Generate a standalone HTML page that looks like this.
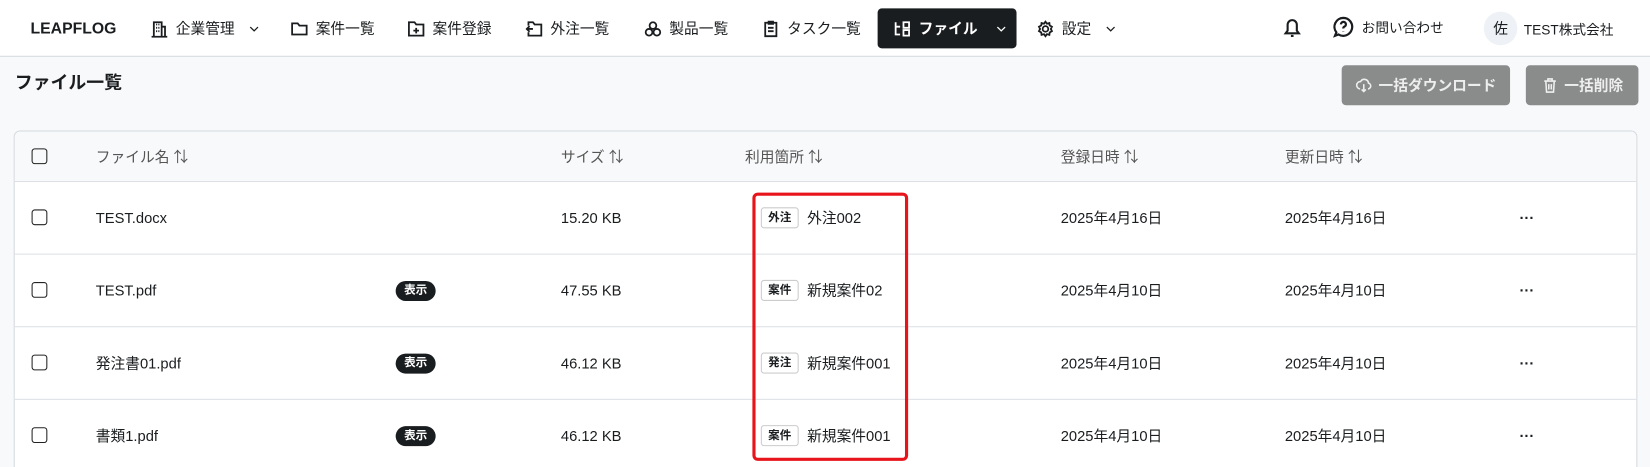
<!DOCTYPE html>
<html style="overflow:hidden;height:467px"><head><meta charset="utf-8"><style>
*{box-sizing:border-box;margin:0;padding:0}
body{width:1650px;height:467px;overflow:hidden;background:#f8f9fa;font-family:"Liberation Sans","Noto Sans CJK JP",sans-serif;color:#1a1d1f;font-size:14px;position:relative}
#w{position:absolute;left:0;top:0;width:1568px;height:444px;overflow:hidden;transform:scale(1.05230);transform-origin:0 0}
.hdr{position:absolute;left:0;top:0;width:1568px;height:54px;background:#fff;border-bottom:1px solid #d5d9de}
.a{position:absolute;display:flex;align-items:center;gap:7px;font-size:14px;white-space:nowrap;height:20px}
.a svg{width:17px;height:17px;fill:none;stroke:#1a1d1f;stroke-width:1.6}
.a svg.ch{width:11px;height:11px;stroke-width:1.3;margin-left:6px}
.btn{position:absolute;top:62px;height:38px;background:#8a8c8c;color:#eee;border-radius:4px;display:flex;align-items:center;justify-content:center;gap:6px;font-size:14px;font-weight:bold}
.card{position:absolute;left:13px;top:124px;width:1543px;height:340px;background:#fff;border:1px solid #d5d9de;border-radius:6px;overflow:hidden}
.row{position:absolute;left:0;width:100%;border-bottom:1px solid #dde1e5}
.c{position:absolute;top:0;height:100%;display:flex;align-items:center;font-size:14px;white-space:nowrap}
.cb{position:absolute;left:16px;top:50%;margin-top:-8px;width:15px;height:15px;border:1.6px solid #222;border-radius:3px}
.tag{display:inline-block;border:1px solid #ccc;border-radius:3px;font-size:11px;font-weight:bold;padding:2px 6px;margin-right:8px;line-height:14px}
.show{background:#1a1d1f;color:#fff;border-radius:10px;font-size:11px;font-weight:bold;padding:2px 8px;line-height:15px}
.th{color:#555}
</style></head><body><div id="w">
<div class="hdr">
<div class="a" style="left:29px;top:17px;font-weight:bold;font-size:15px">LEAPFLOG</div>
<div class="a" style="left:143px;top:17px"><svg viewBox="0 0 16 16"><path d="M3 15V2h7v13M10 6h3v9M1 15h14M5 4h1M7 4h1M5 7h1M7 7h1M5 10h1M7 10h1"/></svg>企業管理<svg class="ch" viewBox="0 0 12 12"><path d="M2 4l4 4 4-4"/></svg></div>
<div class="a" style="left:276px;top:17px"><svg viewBox="0 0 16 16"><path d="M1.5 3h5l1.5 2h6.5v8h-13z"/></svg>案件一覧</div>
<div class="a" style="left:387px;top:17px"><svg viewBox="0 0 16 16"><path d="M1.5 2h5l1.5 2h6.5v10h-13zM8 7v5M5.5 9.5h5"/></svg>案件登録</div>
<div class="a" style="left:499px;top:17px"><svg viewBox="0 0 16 16"><path d="M3 5V2h4l1.5 2h6v10H3v-3M1 8h6M4 5.5 1.5 8 4 10.5"/></svg>外注一覧</div>
<div class="a" style="left:612px;top:17px"><svg viewBox="0 0 16 16"><circle cx="8" cy="5" r="3"/><circle cx="4.5" cy="11" r="3"/><circle cx="11.5" cy="11" r="3"/></svg>製品一覧</div>
<div class="a" style="left:724px;top:17px"><svg viewBox="0 0 16 16"><path d="M3 2.5h10v12H3zM6 1.5h4v2H6zM5.5 7h5M5.5 10h5"/></svg>タスク一覧</div>
<div style="position:absolute;left:834px;top:8px;width:132px;height:38px;background:#1a1d1f;border-radius:4px"></div>
<div class="a" style="left:849px;top:17px;color:#fff;font-weight:bold"><svg viewBox="0 0 16 16" style="stroke:#fff"><path d="M2 2v11h4M2 6h4M9 2h5v5H9zM9 9h5v5H9z"/></svg>ファイル<svg class="ch" viewBox="0 0 12 12" style="stroke:#fff;margin-left:10px"><path d="M2 4l4 4 4-4"/></svg></div>
<div class="a" style="left:985px;top:17px"><svg viewBox="0 0 16 16"><circle cx="8" cy="8" r="2.5"/><path d="M8 1.5l1.3 1.8 2.2-.6.3 2.2 2 1.1-1 2 1 2-2 1.1-.3 2.2-2.2-.6L8 14.5l-1.3-1.8-2.2.6-.3-2.2-2-1.1 1-2-1-2 2-1.1.3-2.2 2.2.6z"/></svg>設定<svg class="ch" viewBox="0 0 12 12"><path d="M2 4l4 4 4-4"/></svg></div>
<div class="a" style="left:1218px;top:16px"><svg viewBox="0 0 16 16" style="width:20px;height:20px"><path d="M3 12.5h10l-1.5-2V6a3.5 3.5 0 0 0-7 0v4.5zM7 14.5h2"/></svg></div>
<div class="a" style="left:1266px;top:15px;font-size:13px"><svg viewBox="0 0 16 16" style="width:21px;height:21px"><path d="M8 1.5a6.5 6.5 0 1 1-3.5 12L2 14.5l1-2.5A6.5 6.5 0 0 1 8 1.5zM6.3 6.2a1.8 1.8 0 1 1 2.4 1.7c-.5.3-.7.6-.7 1.3M8 11v.3"/></svg>お問い合わせ</div>
<div style="position:absolute;left:1410px;top:11px;width:32px;height:32px;border-radius:50%;background:#eef1f5;text-align:center;line-height:32px;font-size:14px">佐</div>
<div class="a" style="left:1448px;top:17px;font-size:13px">TEST株式会社</div>
</div>
<div class="a" style="left:14px;top:66px;font-size:17px;font-weight:bold">ファイル一覧</div>
<div class="btn" style="left:1275px;width:160px"><svg viewBox="0 0 16 16" width="16" height="16" fill="none" stroke="#eee" stroke-width="1.5"><path d="M4.5 11.5a3.5 3.5 0 0 1 .5-7A4 4 0 0 1 12.5 6a2.8 2.8 0 0 1-.5 5.5M8 7v7M6 12l2 2 2-2"/></svg>一括ダウンロード</div>
<div class="btn" style="left:1450px;width:107px"><svg viewBox="0 0 16 16" width="16" height="16" fill="none" stroke="#eee" stroke-width="1.5"><path d="M2.5 4h11M6 4V2h4v2M4 4l.7 10.5h6.6L12 4M6.8 7v5M9.2 7v5"/></svg>一括削除</div>
<div class="card">
<div class="row" style="top:0;height:48px;background:#f8f9fa">
<div class="cb"></div>
<div class="c th" style="left:77px">ファイル名 ⇅</div>
<div class="c th" style="left:519px">サイズ ⇅</div>
<div class="c th" style="left:694px">利用箇所 ⇅</div>
<div class="c th" style="left:994px">登録日時 ⇅</div>
<div class="c th" style="left:1207px">更新日時 ⇅</div>
</div>
<div class="row" style="top:48px;height:69px">
<div class="cb"></div><div class="c" style="left:77px">TEST.docx</div>
<div class="c" style="left:519px">15.20 KB</div>
<div class="c" style="left:709px"><span class="tag">外注</span>外注002</div>
<div class="c" style="left:994px">2025年4月16日</div><div class="c" style="left:1207px">2025年4月16日</div><div class="c" style="left:1430px;font-weight:bold">···</div></div>
<div class="row" style="top:117px;height:69px">
<div class="cb"></div><div class="c" style="left:77px">TEST.pdf</div><div class="c" style="left:362px"><span class="show">表示</span></div>
<div class="c" style="left:519px">47.55 KB</div>
<div class="c" style="left:709px"><span class="tag">案件</span>新規案件02</div>
<div class="c" style="left:994px">2025年4月10日</div><div class="c" style="left:1207px">2025年4月10日</div><div class="c" style="left:1430px;font-weight:bold">···</div></div>
<div class="row" style="top:186px;height:69px">
<div class="cb"></div><div class="c" style="left:77px">発注書01.pdf</div><div class="c" style="left:362px"><span class="show">表示</span></div>
<div class="c" style="left:519px">46.12 KB</div>
<div class="c" style="left:709px"><span class="tag">発注</span>新規案件001</div>
<div class="c" style="left:994px">2025年4月10日</div><div class="c" style="left:1207px">2025年4月10日</div><div class="c" style="left:1430px;font-weight:bold">···</div></div>
<div class="row" style="top:255px;height:69px">
<div class="cb"></div><div class="c" style="left:77px">書類1.pdf</div><div class="c" style="left:362px"><span class="show">表示</span></div>
<div class="c" style="left:519px">46.12 KB</div>
<div class="c" style="left:709px"><span class="tag">案件</span>新規案件001</div>
<div class="c" style="left:994px">2025年4月10日</div><div class="c" style="left:1207px">2025年4月10日</div><div class="c" style="left:1430px;font-weight:bold">···</div></div>
</div>
<div style="position:absolute;left:715px;top:183px;width:148px;height:255px;border:3px solid #e8141b;border-radius:5px"></div>
</div></body></html>
